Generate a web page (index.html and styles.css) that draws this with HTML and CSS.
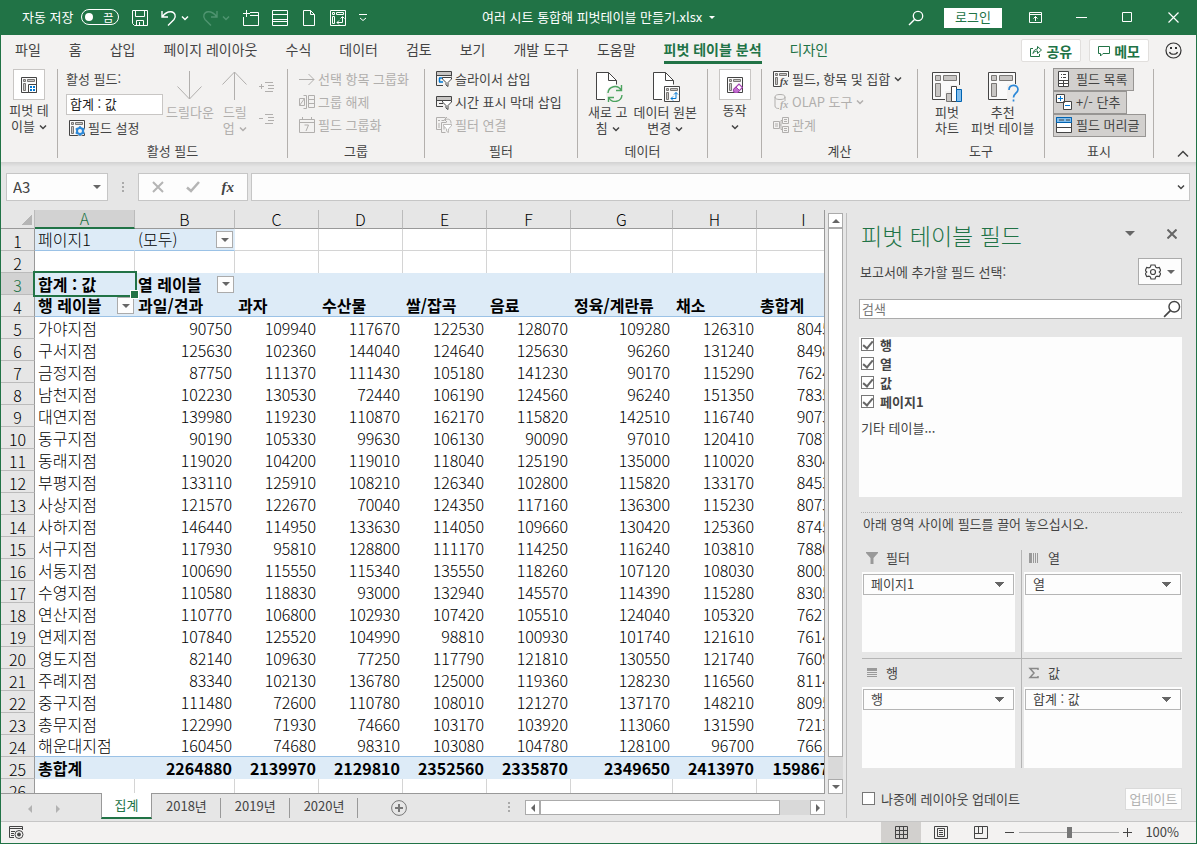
FILE: index.html
```
<!DOCTYPE html>
<html lang="ko">
<head>
    <meta charset="UTF-8">
    <meta name="viewport" content="width=device-width, initial-scale=1.0">
    <title>여러 시트 통합해 피벗테이블 만들기.xlsx</title>
    <link rel="stylesheet" href="styles.css">
</head>
<body>
    <!-- Shared icons -->
    <svg class="sprite" aria-hidden="true">
        <symbol id="chevron" viewBox="0 0 8 8"><path d="M1 2.5 4 5.5 7 2.5" fill="none" stroke="currentColor" stroke-width="1.5"/></symbol>
        <symbol id="pivot" viewBox="0 0 16 16"><path d="M.5.5h15v15H.5z" fill="#fafafa" stroke="currentColor"/><path d="M2.5 2.5h2v2h-2zM6.500 2.500h7v2h-7zM2.500 6.500h2v7h-2z" fill="#c8c6c4" stroke="#797775"/></symbol>
        <symbol id="search" viewBox="0 0 16 16"><circle cx="10" cy="6" r="4.700" fill="none" stroke="currentColor" stroke-width="1.300"/><path d="M6.500 9.500 1 15" stroke="currentColor" stroke-width="1.500"/></symbol>
        <symbol id="filter" viewBox="0 0 10 10"><path d="M.5.5h9v1.500L6 5.500v4l-2-1.500V5.500L.5 2z" fill="#fff" stroke="currentColor"/></symbol>
    </svg>

    <header class="titlebar">
        <div class="quick-access">
            <label class="autosave">자동 저장 <input type="checkbox" class="toggle" aria-label="자동 저장"><span class="toggle-text">끔</span></label>
            <button class="qa" aria-label="저장"><svg width="16" height="16" viewBox="0 0 16 16" fill="none" stroke="currentColor"><path d="M.5.5h15v15H2.500l-2-2zM3.500.5v6h9v-6M4.500 15.500v-5h7v5M7.500 12v3.500"/></svg></button>
            <button class="qa with-arrow" aria-label="실행 취소"><svg width="16" height="16" viewBox="0 0 16 16" fill="none" stroke="currentColor" stroke-width="1.400"><path d="M1 1v6h6M1.500 6.500C4 3 7 1.500 10 1.700c4 .3 5.500 4.800 3 7.800L7 15.500"/></svg><svg width="8" height="8"><use href="#chevron"/></svg></button>
            <button class="qa with-arrow dim" aria-label="다시 실행"><svg width="16" height="16" viewBox="0 0 16 16" fill="none" stroke="currentColor" stroke-width="1.400"><path d="M15 1v6H9M14.500 6.500C12 3 9 1.500 6 1.700 2 2 .5 6.500 3 9.500l6 6"/></svg><svg width="8" height="8"><use href="#chevron"/></svg></button>
            <button class="qa" aria-label="새로 만들기"><svg width="16" height="16" viewBox="0 0 16 16" fill="none" stroke="currentColor"><path d="M7 2.500h8.500v13H.5V7M7 5.500h8.500M3.500 0v7M0 3.500h7"/></svg></button>
            <button class="qa" aria-label="표"><svg width="16" height="16" viewBox="0 0 16 16" fill="none" stroke="currentColor"><path d="M.5.5h15v15H.5zM.5 4.500h15M.5 9.500h15M.5 11.500h15"/></svg></button>
            <button class="qa" aria-label="새 문서"><svg width="16" height="16" viewBox="0 0 16 16" fill="none" stroke="currentColor"><path d="M2.500.5h7l4 4v11h-11zM9.500.5v4h4"/></svg></button>
            <button class="qa" aria-label="피벗"><svg width="16" height="16" viewBox="0 0 16 16" fill="none" stroke="currentColor"><path d="M.5.5h15v15H.5zM2.500 2.500h2v2h-2zM6.500 2.500h7v2h-7zM2.500 6.500h2v7h-2zM7 12.500h5.500V7M9 10.500l-2 2 2 2M10.500 8.500l2-2 2 2"/></svg></button>
            <button class="qa" aria-label="사용자 지정"><svg width="8" height="8" viewBox="0 0 8 8" fill="none" stroke="currentColor"><path d="M0 .5h8M1 4l3 2.500L7 4"/></svg></button>
        </div>
        <div class="file-name">여러 시트 통합해 피벗테이블 만들기.xlsx <span class="tri light"></span></div>
        <div class="window-controls">
            <button class="qa" aria-label="검색"><svg width="16" height="16"><use href="#search"/></svg></button>
            <button class="login">로그인</button>
            <button class="wc" aria-label="리본 표시"><svg width="13" height="11" viewBox="0 0 13 11" fill="none" stroke="currentColor"><path d="M.5.5h12v10H.5zM.5 2.500h12M6.500 9V4.500M4.500 6.500l2-2 2 2"/></svg></button>
            <button class="wc" aria-label="최소화"><svg width="11" height="11" viewBox="0 0 11 11" stroke="currentColor"><path d="M0 5.500h11"/></svg></button>
            <button class="wc" aria-label="최대화"><svg width="11" height="11" viewBox="0 0 11 11" fill="none" stroke="currentColor"><path d="M.5.5h9v9h-9z"/></svg></button>
            <button class="wc" aria-label="닫기"><svg width="11" height="11" viewBox="0 0 11 11" stroke="currentColor" stroke-width="1.200"><path d="M.5.5l10 10M10.500.5l-10 10"/></svg></button>
        </div>
    </header>

    <nav class="tabs">
        <a href="#">파일</a>
        <a href="#">홈</a>
        <a href="#">삽입</a>
        <a href="#">페이지 레이아웃</a>
        <a href="#">수식</a>
        <a href="#">데이터</a>
        <a href="#">검토</a>
        <a href="#">보기</a>
        <a href="#">개발 도구</a>
        <a href="#">도움말</a>
        <a href="#" class="active">피벗 테이블 분석</a>
        <a href="#" class="context">디자인</a>
        <div class="tab-actions">
            <button class="share"><svg width="12" height="12" viewBox="0 0 12 12" fill="none" stroke="currentColor"><path d="M3 3.500H.5v8h9V9M3 8.500c.5-3 2-4.500 4.500-4.500V1.500l4 3.500-4 3.500V6C5.500 6 4 6.500 3 8.500z"/></svg>공유</button>
            <button class="share"><svg width="12" height="12" viewBox="0 0 12 12" fill="none" stroke="currentColor"><path d="M.5 1.500h11v7H5l-2.500 2.500V8.500h-2z"/></svg>메모</button>
            <button class="smile" aria-label="피드백"><svg width="17" height="17" viewBox="0 0 17 17" fill="none" stroke="#333" stroke-width="1.200"><circle cx="8.500" cy="8.500" r="7.500"/><path d="M4.500 10c1 3 7 3 8 0"/><path d="M6 5v2M11 5v2" stroke-width="2"/></svg></button>
        </div>
    </nav>

    <section class="ribbon">
        <div class="group g-pivot">
            <button class="big boxed"><span class="box"><svg width="16" height="16"><use href="#pivot"/><path d="M7.500 7.500h8v8h-8z" fill="#fff" stroke="#444"/><path d="M9 10h2M12 10h2M9 13h2M12 13h2" stroke="#0078d4" stroke-width="2"/></svg></span>피벗 테<br>이블<svg class="arr"><use href="#chevron"/></svg></button>
        </div>

        <div class="group g-active">
            <div class="group-body">
                <div class="active-field">
                    <label for="field-name">활성 필드:</label>
                    <input type="text" id="field-name" value="합계 : 값">
                    <button class="cmd"><svg width="16" height="16" viewBox="0 0 16 16"><use href="#pivot"/><circle cx="11" cy="11" r="5" fill="#f3f2f1"/><circle cx="11" cy="11" r="3" fill="none" stroke="#2b88d8" stroke-width="2"/><path d="M11 6v2M11 14v2M6.700 8.500l1.700 1M13.600 12.500l1.700 1M6.700 13.500l1.700-1M13.600 9.500l1.700-1" stroke="#2b88d8" stroke-width="1.500"/></svg>필드 설정</button>
                </div>
                <button class="big off" disabled><svg width="26" height="32" viewBox="0 0 26 32" fill="none" stroke="currentColor"><path d="M12.500 1v28M.5 16.500l12 12.500 12-12.500"/></svg>드릴다운</button>
                <button class="big off" disabled><svg width="26" height="32" viewBox="0 0 26 32" fill="none" stroke="currentColor"><path d="M12.500 30V2M.5 14.500 12.500 2l12 12.500"/></svg>드릴<br>업<svg class="arr"><use href="#chevron"/></svg></button>
                <div class="expand off">
                    <button aria-label="필드 확장" disabled><svg width="16" height="12" viewBox="0 0 16 12" stroke="currentColor"><path d="M6 1.500h8M9 4.500h6M9 7.500h6M6 10.500h8M0 5.500h5M2.500 3v5"/></svg></button>
                    <button aria-label="필드 축소" disabled><svg width="16" height="12" viewBox="0 0 16 12" stroke="currentColor"><path d="M6 1.500h8M9 4.500h6M9 7.500h6M6 10.500h8M0 5.500h4"/></svg></button>
                </div>
            </div>
            <div class="group-label">활성 필드</div>
        </div>

        <div class="group g-group">
            <div class="group-body rows off">
                <button class="cmd" disabled><svg width="16" height="16" viewBox="0 0 16 16" fill="none" stroke="currentColor"><path d="M0 8.500h15M9.500 3 15 8.500 9.500 14"/></svg>선택 항목 그룹화</button>
                <button class="cmd" disabled><svg width="16" height="16" viewBox="0 0 16 16" fill="none" stroke="currentColor"><path d="M.5 4.500h5v7h-5zM.5 11.500l5-7M7.500 1.500h-3M7.500 14.500h-3M7.500 1.500v13M9.500 1.500h6v12h-6zM9.500 5.500h6M9.500 9.500h6"/></svg>그룹 해제</button>
                <button class="cmd" disabled><svg width="16" height="16" viewBox="0 0 16 16" fill="none" stroke="currentColor"><path d="M.5 2.500h15v13H.5zM.5 5.500h15M3.500 0v3M12.500 0v3M5.500 8h4L7 14"/></svg>필드 그룹화</button>
            </div>
            <div class="group-label">그룹</div>
        </div>

        <div class="group g-filter">
            <div class="group-body rows">
                <button class="cmd"><svg width="16" height="16" viewBox="0 0 16 16" fill="none" stroke="currentColor"><path d="M1 1h14v3H1z" fill="#c8c6c4" stroke="none"/><path d="M7 14.500H.5V.5h15v5M.5 4.500h15"/><path d="M3 7h10M3 11h4M3.500 7v4" stroke="#0078d4" stroke-width="1.500"/><svg x="6" y="6" width="10" height="10"><use href="#filter"/></svg></svg>슬라이서 삽입</button>
                <button class="cmd"><svg width="16" height="16" viewBox="0 0 16 16" fill="none" stroke="currentColor"><path d="M1 3h14v3H1z" fill="#c8c6c4" stroke="none"/><path d="M7 12.500H.5v-10h15V6M.5 6.500h15M3 9.500h4"/><svg x="6" y="6" width="10" height="10"><use href="#filter"/></svg></svg>시간 표시 막대 삽입</button>
                <button class="cmd off" disabled><svg width="16" height="16" viewBox="0 0 16 16" fill="none" stroke="currentColor"><path d="M6 12.500H.5V.5h9M2 3.500h2M5.500 3.500h3M3 6v5M5.500 15.500v-10h5M5.500 15.500h4M8 8.500v4M11 0 8.500 2.500 11 5M9 2.500c4-1 6 0 6 4"/><svg x="7" y="7" width="9" height="9"><use href="#filter"/></svg></svg>필터 연결</button>
            </div>
            <div class="group-label">필터</div>
        </div>

        <div class="group g-data">
            <div class="group-body">
                <button class="big"><svg width="32" height="32" viewBox="0 0 32 32" fill="none"><path d="M4.500 2.500h12l8 8v19h-20z" fill="#fff"/><path d="M13 29.500H4.500v-27h12l8 8v4M16.500 2.500v8h8" stroke="#444"/><circle cx="23" cy="24" r="9" fill="#f3f2f1"/><path d="M16 23a7 7 0 0 1 13-3M30 25a7 7 0 0 1-13 3M29.500 15v5.500H24M16.500 33v-5.500H22" stroke="#4ba35f" stroke-width="1.400"/></svg>새로 고<br>침<svg class="arr"><use href="#chevron"/></svg></button>
                <button class="big"><svg width="32" height="32" viewBox="0 0 32 32" fill="none"><path d="M4.500 2.500h12l8 8v19h-20z" fill="#fff"/><path d="M13 29.500H4.500v-27h12l8 8v4M16.500 2.500v8h8" stroke="#444"/><svg x="15" y="16" width="16" height="16"><use href="#pivot"/></svg><path d="M22 28.500h5v-6M24 26.500l-2 2 2 2M25 24.500l2-2 2 2" stroke="#0078d4"/></svg>데이터 원본<br>변경<svg class="arr"><use href="#chevron"/></svg></button>
            </div>
            <div class="group-label">데이터</div>
        </div>

        <div class="group g-action">
            <button class="big boxed"><span class="box"><svg width="16" height="16" viewBox="0 0 16 16"><use href="#pivot"/><path d="M6.500 12.500 12 7l3.500 3.500L10 16H8.500l-2-2z" fill="#fff" stroke="#a33fb0" stroke-width="1.200"/><path d="M6.500 12.500 9 10l3.500 3.500L10 16H8.500l-2-2z" fill="#c26fce" stroke="#a33fb0"/></svg></span>동작<br><svg class="arr lone"><use href="#chevron"/></svg></button>
        </div>

        <div class="group g-calc">
            <div class="group-body rows">
                <button class="cmd"><svg width="16" height="16" viewBox="0 0 16 16"><use href="#pivot"/><path d="M7 6h9v10H7z" fill="#f3f2f1"/><text x="7" y="14" class="fx-small">fx</text></svg>필드, 항목 및 집합<svg class="arr"><use href="#chevron"/></svg></button>
                <button class="cmd off" disabled><svg width="16" height="16" viewBox="0 0 16 16" fill="none" stroke="currentColor"><ellipse cx="7" cy="3" rx="5" ry="2.500"/><path d="M2 3v9c0 2 2 2.500 4 2.500M12 3v4"/><text x="7" y="14" class="fx-small">fx</text></svg>OLAP 도구<svg class="arr"><use href="#chevron"/></svg></button>
                <button class="cmd off" disabled><svg width="16" height="16" viewBox="0 0 16 16" fill="none" stroke="currentColor"><path d="M.5 4.500h6v7h-6zM9.500.5h6v6h-6zM9.500 9.500h6v6h-6zM6.500 8h1.500M9.500 3.500H8v9h1.500M2 7h3M2 9h3M11 2.500h3M11 4.500h3M11 11.500h3M11 13.500h3"/></svg>관계</button>
            </div>
            <div class="group-label">계산</div>
        </div>

        <div class="group g-tools">
            <div class="group-body">
                <button class="big"><svg width="32" height="32" viewBox="0 0 32 32"><path d="M1.500 2.500h27v27h-27z" fill="#fafafa" stroke="#444"/><path d="M4.500 5.500h5v5h-5zM12.500 5.500h13v5h-13zM4.500 13.500h5v13h-5z" fill="#c8c6c4" stroke="#797775"/><path d="M14 21h5v-6h12v17H14z" fill="#f3f2f1"/><path d="M15.500 23.500h5v8h-5z" fill="#c8c6c4" stroke="#797775"/><path d="M20.500 16.500h5v15h-5z" fill="#fff" stroke="#444"/><path d="M25.500 19.500h5v12h-5z" fill="#83beec" stroke="#0063b1"/></svg>피벗<br>차트</button>
                <button class="big"><svg width="32" height="32" viewBox="0 0 32 32"><path d="M1.500 2.500h27v27h-27z" fill="#fafafa" stroke="#444"/><path d="M4.500 5.500h5v5h-5zM12.500 5.500h13v5h-13zM4.500 13.500h5v13h-5z" fill="#c8c6c4" stroke="#797775"/><path d="M20 14h12v18H20z" fill="#f3f2f1"/><path d="M22 20c0-6 9-6 9-.5 0 3.500-4.500 4-4.500 8M26.500 29.500v2" fill="none" stroke="#2b88d8" stroke-width="1.700"/></svg>추천<br>피벗 테이블</button>
            </div>
            <div class="group-label">도구</div>
        </div>

        <div class="group g-show">
            <div class="group-body rows">
                <button class="cmd pressed" aria-pressed="true"><svg width="16" height="16" viewBox="0 0 16 16" stroke="#444"><path d="M2.500.5h10v15h-10z" fill="#fff"/><path d="M5 3.500h1M7 3.500h3M5 6.500h1M7 6.500h3M2.500 9.500h10M2.500 12.500h10M7.500 9.500v6"/></svg>필드 목록</button>
                <button class="cmd pressed" aria-pressed="true"><svg width="16" height="16" viewBox="0 0 16 16"><path d="M.5.5h8v8h-8zM7.500 7.500h8v8h-8z" fill="#fff" stroke="#444"/><path d="M2 4.500h5M4.500 2v5M9 11.500h5" stroke="#0078d4"/></svg>+/- 단추</button>
                <button class="cmd pressed" aria-pressed="true"><svg width="16" height="16" viewBox="0 0 16 16"><path d="M.5.5h15v15H.5z" fill="#fff" stroke="#444"/><path d="M.5.5h15v5H.5z" fill="#83beec" stroke="#0063b1"/><path d="M.5 10.500h15M3 3h5M10 3h4" stroke="#444"/></svg>필드 머리글</button>
            </div>
            <div class="group-label">표시</div>
        </div>
        <button class="collapse" aria-label="리본 축소"><svg width="12" height="8" viewBox="0 0 12 8" fill="none" stroke="#444" stroke-width="1.500"><path d="M1 6.500l5-5 5 5"/></svg></button>
    </section>

    <div class="formula-bar">
        <div class="name-box"><input type="text" value="A3" aria-label="이름 상자"><button aria-label="이름 목록"><span class="tri"></span></button></div>
        <span class="dots"></span>
        <div class="fx-buttons">
            <button aria-label="취소"><svg width="12" height="12" viewBox="0 0 12 12" stroke="#b5b5b5" stroke-width="2"><path d="M1 1l10 10M11 1 1 11"/></svg></button>
            <button aria-label="입력"><svg width="14" height="12" viewBox="0 0 14 12" fill="none" stroke="#b5b5b5" stroke-width="2.500"><path d="M1 6.500 5 10l8-9"/></svg></button>
            <button aria-label="함수 삽입" class="fx">fx</button>
        </div>
        <div class="formula"><input type="text" aria-label="수식"><button aria-label="수식 입력줄 확장"><svg width="8" height="8"><use href="#chevron"/></svg></button></div>
    </div>

    <main class="workspace">
        <section class="book">
            <div class="grid-area">
                <div class="grid">
                    <table>
                        <colgroup>
                            <col class="c-num"><col class="c-wide"><col class="c-wide"><col class="c-mid"><col class="c-mid"><col class="c-mid"><col class="c-mid"><col class="c-big"><col class="c-mid"><col class="c-total">
                        </colgroup>
                        <thead>
                            <tr><th class="corner"></th><th class="on">A</th><th>B</th><th>C</th><th>D</th><th>E</th><th>F</th><th>G</th><th>H</th><th>I</th></tr>
                        </thead>
                        <tbody id="cells">
                            <tr class="page"><th>1</th><td class="blue">페이지1</td><td class="blue"><div class="with-filter">(모두)<button class="drop" aria-label="페이지1 필터"><span class="tri"></span></button></div></td><td></td><td></td><td></td><td></td><td></td><td></td><td></td></tr>
                            <tr class="lined"><th>2</th><td></td><td></td><td></td><td></td><td></td><td></td><td></td><td></td><td></td></tr>
                            <tr class="head"><th class="on">3</th><td class="selected">합계 : 값</td><td><div class="with-filter">열 레이블<button class="drop" aria-label="열 레이블 필터"><span class="tri"></span></button></div></td><td></td><td></td><td></td><td></td><td></td><td></td><td></td></tr>
                            <tr class="head under"><th>4</th><td><div class="with-filter">행 레이블<button class="drop" aria-label="행 레이블 필터"><span class="tri"></span></button></div></td><td>과일/견과</td><td>과자</td><td>수산물</td><td>쌀/잡곡</td><td>음료</td><td>정육/계란류</td><td>채소</td><td>총합계</td></tr>
                        </tbody>
                    </table>
                </div>
                <div class="scroll-v">
                    <button aria-label="위로"><span class="tri up"></span></button>
                    <div class="thumb"></div>
                    <button aria-label="아래로"><span class="tri"></span></button>
                </div>
            </div>
            <div class="sheet-bar">
                <div class="sheet-nav"><button aria-label="이전 시트"><span class="tri left"></span></button><button aria-label="다음 시트"><span class="tri right"></span></button></div>
                <button class="sheet current">집계</button>
                <button class="sheet">2018년</button>
                <button class="sheet">2019년</button>
                <button class="sheet">2020년</button>
                <button class="add-sheet" aria-label="새 시트"><svg width="16" height="16" viewBox="0 0 16 16" fill="none" stroke="#777"><circle cx="8" cy="8" r="7.400"/><path d="M8 4v8M4 8h8" stroke-width="2"/></svg></button>
                <span class="dots"></span>
                <div class="scroll-h">
                    <button aria-label="왼쪽으로"><span class="tri left"></span></button>
                    <div class="thumb"></div>
                    <button aria-label="오른쪽으로"><span class="tri right"></span></button>
                </div>
            </div>
        </section>

        <aside class="pane">
            <div class="pane-title">
                <h2>피벗 테이블 필드</h2>
                <button aria-label="작업창 옵션"><span class="tri large"></span></button>
                <button aria-label="닫기"><svg width="10" height="10" viewBox="0 0 10 10" stroke="#666" stroke-width="2"><path d="M.5.5l9 9M9.500.5l-9 9"/></svg></button>
            </div>
            <div class="pane-sub">
                <span>보고서에 추가할 필드 선택:</span>
                <button class="gear" aria-label="도구"><svg width="16" height="16" viewBox="0 0 16 16" fill="none" stroke="#444" stroke-width="1.200"><path d="M6 1h4l.7 2.200 1.300.7 2.300-.5 1.400 3.100L14.300 8l1.400 1.500-1.400 3.100-2.300-.5-1.300.7L10 15H6l-.7-2.200-1.300-.7-2.300.5L.3 9.500 1.700 8 .3 6.500l1.400-3.100 2.300.5 1.300-.7z"/><circle cx="8" cy="8" r="2.500"/></svg><span class="tri"></span></button>
            </div>
            <div class="search"><input type="text" placeholder="검색" aria-label="필드 검색"><svg width="18" height="18"><use href="#search"/></svg></div>
            <div class="field-list">
                <label><input type="checkbox" checked>행</label>
                <label><input type="checkbox" checked>열</label>
                <label><input type="checkbox" checked>값</label>
                <label><input type="checkbox" checked>페이지1</label>
                <a href="#">기타 테이블...</a>
            </div>
            <p class="hint">아래 영역 사이에 필드를 끌어 놓으십시오.</p>
            <div class="areas">
                <div class="area">
                    <label for="a-filter"><svg width="12" height="12" viewBox="0 0 12 12" fill="#999"><path d="M0 0h12v1L7.500 6v6h-3V6L0 1z"/></svg>필터</label>
                    <div class="area-box"><select id="a-filter"><option>페이지1</option></select></div>
                </div>
                <div class="area">
                    <label for="a-col"><svg width="12" height="12" viewBox="0 0 12 12" fill="#999"><path d="M1 1h3v10H1zM5 1h1v10H5zM7 1h1v10H7zM9 1h1v10H9z"/></svg>열</label>
                    <div class="area-box"><select id="a-col"><option>열</option></select></div>
                </div>
                <div class="area">
                    <label for="a-row"><svg width="12" height="12" viewBox="0 0 12 12" fill="#999"><path d="M1 1h10v3H1zM1 5h10v1H1zM1 7h10v1H1zM1 9h10v1H1z"/></svg>행</label>
                    <div class="area-box"><select id="a-row"><option>행</option></select></div>
                </div>
                <div class="area">
                    <label for="a-val"><svg width="12" height="12" viewBox="0 0 12 12" fill="none" stroke="#888" stroke-width="1.500"><path d="M10 3V1.500H2L6 6l-4 4.500h8V9"/></svg>값</label>
                    <div class="area-box"><select id="a-val"><option>합계 : 값</option></select></div>
                </div>
            </div>
            <div class="pane-foot">
                <label><input type="checkbox">나중에 레이아웃 업데이트</label>
                <button class="update" disabled>업데이트</button>
            </div>
        </aside>
    </main>

    <footer class="status">
        <button class="macro" aria-label="매크로 기록"><svg width="15" height="13" viewBox="0 0 15 13" fill="none" stroke="#444"><path d="M5 11.500H.5V.5h13V4M.5 2.500h13M2 5.500h4M2 7.500h3M2 9.500h3"/><circle cx="10" cy="8.500" r="4"/><circle cx="10" cy="8.500" r="1.500" fill="#444"/></svg></button>
        <button class="view on" aria-label="기본"><svg width="13" height="13" viewBox="0 0 13 13" fill="none" stroke="#444"><path d="M.5.5h12v12H.5zM4.500.5v12M8.500.5v12M.5 4.500h12M.5 8.500h12"/></svg></button>
        <button class="view" aria-label="페이지 레이아웃"><svg width="14" height="13" viewBox="0 0 14 13" fill="none" stroke="#444"><path d="M.5.5h13v12H.5zM3.500 2.500h7v8h-7zM5 4.500h4M5 6.500h4M5 8.500h4"/></svg></button>
        <button class="view" aria-label="페이지 나누기"><svg width="14" height="13" viewBox="0 0 14 13" fill="none" stroke="#444"><path d="M.5.5h13v12H.5zM.5 7.500h8v-7M4.500.5v7"/></svg></button>
        <button class="zoom-btn" aria-label="축소"><svg width="9" height="9" viewBox="0 0 9 9" stroke="#444"><path d="M0 4.500h9"/></svg></button>
        <input type="range" class="zoom" min="0" max="100" value="50" aria-label="확대/축소">
        <button class="zoom-btn" aria-label="확대"><svg width="9" height="9" viewBox="0 0 9 9" stroke="#444"><path d="M0 4.500h9M4.500 0v9"/></svg></button>
        <span class="percent">100%</span>
    </footer>

    <script src="script.js"></script>
</body>
</html>
```
FILE: styles.css
```
* {
    box-sizing: border-box;
}

body {
    margin: 0;
    height: 100vh;
    display: flex;
    flex-direction: column;
    overflow: hidden;
    border: 1px solid #217346;
    border-top: none;
    background-color: #e6e6e6;
    color: #444;
    font-family: "Noto Sans CJK KR", "Noto Sans", sans-serif;
    font-size: 13px;
    line-height: 16px;
}

button, input, select {
    font: inherit;
    color: inherit;
    margin: 0;
    padding: 0;
    border: none;
    border-radius: 0;
    background: none;
}

a {
    color: inherit;
    text-decoration: none;
}

svg {
    flex: none;
}

.sprite {
    display: none;
}

/* Small arrows */
.tri {
    display: inline-block;
    flex: none;
    border: 4px solid transparent;
    border-top-color: #666;
    border-bottom: none;
}

.tri.light {
    border-width: 3px;
    border-top-color: #fff;
    border-bottom: none;
    vertical-align: middle;
    margin-left: 3px;
}

.tri.large {
    border-width: 5px;
    border-bottom: none;
}

.tri.up {
    border-top: none;
    border-bottom: 4px solid #666;
}

.tri.left {
    border: 4px solid transparent;
    border-right-color: #666;
    border-left: none;
}

.tri.right {
    border: 4px solid transparent;
    border-left-color: #666;
    border-right: none;
}

.dots {
    width: 2px;
    height: 11px;
    background: repeating-linear-gradient(#aaa 0 2px, transparent 2px 4px);
}

/* Title bar */
.titlebar {
    flex: none;
    height: 35px;
    display: grid;
    grid-template-columns: 1fr auto 1fr;
    align-items: center;
    background-color: #217346;
    color: #fff;
}

.file-name {
    padding-bottom: 2px;
}

.quick-access {
    display: flex;
    align-items: center;
    gap: 13px;
    padding-left: 21px;
}

.autosave {
    position: relative;
    display: flex;
    align-items: center;
    gap: 8px;
    padding-bottom: 2px;
}

.toggle {
    appearance: none;
    width: 38px;
    height: 16px;
    border: 1px solid #fff;
    border-radius: 8px;
    display: flex;
    align-items: center;
    padding-left: 3px;
}

.toggle::before {
    content: "";
    width: 8px;
    height: 8px;
    border-radius: 50%;
    background-color: #fff;
}

.toggle-text {
    position: absolute;
    right: 6px;
    font-size: 11px;
}

.qa {
    display: flex;
    align-items: center;
}

.with-arrow {
    gap: 4px;
}

.dim {
    color: #4f9470;
}

.window-controls {
    display: flex;
    justify-content: flex-end;
    align-items: center;
}

.login {
    width: 58px;
    height: 20px;
    margin: 0 10px 0 20px;
    padding-bottom: 2px;
    background-color: #fff;
    color: #217346;
}

.wc {
    width: 46px;
    height: 35px;
    display: flex;
    align-items: center;
    justify-content: center;
}

/* Ribbon tabs */
.tabs {
    flex: none;
    height: 32px;
    display: flex;
    align-items: flex-start;
    gap: 28px;
    padding: 4px 14px 0 14px;
    background-color: #f3f2f1;
    font-size: 14px;
    white-space: nowrap;
}

.tabs a {
    padding-bottom: 2px;
    line-height: 20px;
    border-bottom: 3px solid transparent;
}

.tabs .active {
    color: #217346;
    font-weight: bold;
    border-bottom-color: #217346;
}

.tabs .context {
    color: #217346;
}

.tab-actions {
    margin-left: auto;
    display: flex;
    align-items: center;
    gap: 8px;
}

.share {
    display: flex;
    align-items: center;
    gap: 4px;
    height: 23px;
    padding: 0 8px;
    background-color: #fff;
    border: 1px solid #e1dfdd;
    border-radius: 2px;
    color: #217346;
    font-size: 14px;
    font-weight: bold;
}

.smile {
    display: flex;
    padding-left: 8px;
}

/* Ribbon */
.ribbon {
    flex: none;
    height: 95px;
    display: flex;
    padding: 2px 0 4px;
    background-color: #f3f2f1;
    white-space: nowrap;
}

.group {
    flex: none;
    display: flex;
    flex-direction: column;
    align-items: center;
    border-right: 1px solid #b3b0ad;
}

.group-body {
    flex: 1;
    width: 100%;
    display: flex;
}

.group-label {
    margin-bottom: -1px;
    text-align: center;
}

.g-pivot { width: 57px; }
.g-active { width: 230px; }
.g-group { width: 137px; }
.g-filter { width: 153px; }
.g-data { width: 130px; }
.g-action { width: 54px; }
.g-calc { width: 156px; }
.g-tools { width: 127px; }
.g-show { width: 109px; }

.g-active .group-body {
    padding-left: 8px;
    gap: 3px;
}

.g-active .big + .big {
    margin-left: 5px;
}

.g-group .rows,
.g-filter .rows,
.g-calc .rows {
    padding-left: 11px;
}

.g-data .group-body {
    padding-left: 10px;
    gap: 6px;
}

.g-tools .group-body {
    padding-left: 13px;
    gap: 8px;
}

.g-show .rows {
    padding-left: 8px;
    margin-top: -1px;
}

.rows {
    flex-direction: column;
    align-items: flex-start;
}

.cmd {
    display: flex;
    align-items: center;
    gap: 3px;
    height: 23px;
}

.rows .cmd:first-child {
    margin-top: -2px;
}

.g-show .cmd:first-child {
    margin-top: 0;
}

.arr {
    width: 8px;
    height: 8px;
    margin-left: 4px;
}

.arr.lone {
    margin-left: 0;
}

.cmd .arr {
    margin-left: 1px;
}

.pressed {
    padding: 0 6px 1px 2px;
    gap: 4px;
    background-color: #d2d0ce;
    border: 1px solid #979593;
}

.off {
    color: #b1afad;
}

.big {
    line-height: 16px;
    text-align: center;
    align-self: flex-start;
    padding-top: 1px;
}

.big > svg:first-child {
    display: block;
    margin: 0 auto 2px;
}

.boxed {
    padding-top: 0;
    align-self: center;
}

.box {
    display: flex;
    align-items: center;
    justify-content: center;
    width: 32px;
    height: 31px;
    margin: 0 auto 2px;
    background-color: #fff;
    border: 1px solid #c8c6c4;
}

.active-field {
    width: 97px;
    display: flex;
    flex-direction: column;
    padding-top: 2px;
}

.active-field input {
    width: 97px;
    height: 21px;
    margin: 7px 0 1px;
    padding: 0 3px 2px;
    background-color: #fff;
    border: 1px solid #c8c6c4;
    color: #222;
}

.active-field .cmd {
    padding-left: 3px;
}

.expand {
    display: flex;
    flex-direction: column;
    gap: 20px;
    padding: 12px 0 0 8px;
}

.expand button {
    height: 12px;
    display: flex;
}

.fx-small {
    font: italic bold 10px "Liberation Serif", serif;
    fill: currentColor;
    stroke: none;
}

.collapse {
    margin: auto 7px 0 auto;
    display: flex;
}

/* Formula bar */
.formula-bar {
    flex: none;
    height: 48px;
    display: flex;
    align-items: center;
    padding: 2px 6px 0 5px;
    background: linear-gradient(#d2d2d2, #e6e6e6 5px);
}

.formula-bar button {
    display: flex;
}

.name-box,
.fx-buttons,
.formula {
    height: 28px;
    display: flex;
    align-items: center;
    background-color: #fdfdfd;
    border: 1px solid #c6c6c6;
}

.name-box {
    width: 102px;
    padding: 0 6px;
    font-size: 15px;
}

.name-box input {
    flex: 1;
    min-width: 0;
}

.formula-bar .dots {
    margin: 0 14px;
}

.fx-buttons {
    width: 110px;
    justify-content: space-around;
    padding: 0 2px;
    margin-right: 3px;
}

.fx {
    font: italic bold 15px "Liberation Serif", serif;
}

.formula {
    flex: 1;
    padding: 0 4px;
}

.formula input {
    flex: 1;
}

/* Workspace */
.workspace {
    flex: 1;
    min-height: 0;
    display: flex;
}

.book {
    flex: 1;
    min-width: 0;
    display: flex;
    flex-direction: column;
}

.grid-area {
    flex: 1;
    min-height: 0;
    display: flex;
}

.grid {
    flex: 1;
    min-width: 0;
    overflow: hidden;
    border-right: 1px solid #999;
    border-bottom: 1px solid #999;
}

table {
    width: 850px;
    table-layout: fixed;
    border-collapse: separate;
    border-spacing: 0;
    font-size: 16px;
    line-height: 21px;
    color: #000;
    background-color: #fff;
    white-space: nowrap;
}

.c-num { width: 34px; }
.c-wide { width: 100px; }
.c-mid { width: 84px; }
.c-big { width: 102px; }
.c-total { width: 94px; }

th {
    padding: 0;
    font-weight: 300;
    background-color: #e6e6e6;
    border-right: 1px solid #999;
    border-bottom: 1px solid #bbb;
}

thead th {
    height: 19px;
    line-height: 17px;
    border-right-color: #bbb;
    border-bottom-color: #999;
}

tbody th {
    padding-top: 3px;
    line-height: 18px;
}

th.on {
    background-color: #d2d2d2;
    color: #217346;
}

thead th.on {
    border-bottom: 2px solid #217346;
}

.corner {
    background: linear-gradient(135deg, transparent 50%, #b5b5b5 50%) no-repeat 20px 5px / 11px 10px #e6e6e6;
}

td {
    height: 22px;
    padding: 0 3px;
    text-align: right;
    font-weight: 300;
}

td:nth-child(2),
.page td,
.head td {
    text-align: left;
}

.page td,
.lined td {
    border-right: 1px solid #d4d4d4;
}

.page td {
    border-bottom: 1px solid #d4d4d4;
}

.page td.blue {
    background-color: #ddebf7;
    border-right-color: #ddebf7;
    border-bottom-color: #9bc2e6;
}

.head td,
.total td {
    background-color: #ddebf7;
    font-weight: bold;
}

.under td,
.last td {
    border-bottom: 1px solid #9bc2e6;
}

.with-filter {
    display: flex;
    align-items: center;
    justify-content: space-between;
    margin-right: -2px;
}

.drop {
    width: 17px;
    height: 17px;
    display: flex;
    align-items: center;
    justify-content: center;
    background-color: #fdfdfd;
    border: 1px solid #ababab;
}

.selected {
    position: relative;
}

.selected::before {
    content: "";
    position: absolute;
    inset: -2px;
    border: 2px solid #217346;
}

.selected::after {
    content: "";
    position: absolute;
    right: -4px;
    bottom: -4px;
    width: 7px;
    height: 7px;
    background-color: #217346;
    border: 1px solid #fff;
}

/* Scroll bars */
.scroll-v,
.scroll-h {
    display: flex;
    background-color: #d9d9d9;
}

.scroll-v {
    flex-direction: column;
    width: 15px;
    margin: 3px 3px 0 3px;
}

.scroll-h {
    width: 300px;
    height: 15px;
}

.scroll-v button,
.scroll-h button {
    flex: none;
    width: 15px;
    height: 15px;
    display: flex;
    align-items: center;
    justify-content: center;
    background-color: #fff;
    border: 1px solid #ababab;
}

.scroll-v button:last-child {
    margin-top: auto;
}

.scroll-h button:last-child {
    margin-left: auto;
}

.thumb {
    background-color: #fff;
    border: 1px solid #ababab;
}

.scroll-v .thumb {
    height: 91%;
}

.scroll-h .thumb {
    width: 80%;
}

/* Sheet tabs */
.sheet-bar {
    flex: none;
    height: 27px;
    display: flex;
    align-items: center;
    padding-right: 21px;
}

.sheet-nav {
    width: 100px;
    display: flex;
    gap: 24px;
    padding-left: 27px;
    opacity: .4;
}

.sheet {
    height: 20px;
    padding: 0 13px 3px 14px;
    border-right: 1px solid #999;
    line-height: 16px;
}

.current {
    width: 51px;
    height: 26px;
    padding: 0;
    align-self: flex-start;
    margin-top: -1px;
    background-color: #fff;
    border-left: 1px solid #999;
    border-bottom: 2px solid #217346;
    color: #217346;
}

.add-sheet {
    display: flex;
    margin: 0 auto 0 33px;
}

.sheet-bar .dots {
    margin-right: 15px;
}

/* Field pane */
.pane {
    flex: none;
    width: 350px;
    display: flex;
    flex-direction: column;
    margin: 3px 0;
    padding: 6px 14px 0 12px;
    border-left: 1px solid #bdbdbd;
}

.pane-title {
    display: flex;
    align-items: center;
    gap: 32px;
    height: 32px;
    padding: 0 5px 0 2px;
}

.pane-title h2 {
    flex: 1;
    margin: 0;
    font-size: 23px;
    font-weight: 300;
    line-height: 30px;
    color: #217346;
}

.pane-title button {
    display: flex;
    padding-bottom: 3px;
}

.pane-sub {
    display: flex;
    justify-content: space-between;
    align-items: center;
    padding: 7px 0 14px 1px;
}

.gear {
    width: 44px;
    height: 27px;
    display: flex;
    align-items: center;
    justify-content: center;
    gap: 6px;
    background-color: #fdfdfd;
    border: 1px solid #ababab;
}

.search {
    display: flex;
    align-items: center;
    height: 20px;
    background-color: #fff;
    border: 1px solid #ababab;
}

.search input {
    flex: 1;
    padding: 0 0 2px 2px;
    height: 18px;
}

.search input::placeholder {
    color: #777;
}

.field-list {
    height: 160px;
    margin-top: 18px;
    padding-left: 2px;
    background-color: #fdfdfd;
}

.field-list label {
    display: flex;
    align-items: center;
    height: 19px;
    gap: 6px;
    padding-bottom: 4px;
    font-weight: bold;
}

.field-list a {
    display: block;
    margin-top: 7px;
}

input[type="checkbox"]:not(.toggle) {
    appearance: none;
    width: 13px;
    height: 13px;
    display: flex;
    justify-content: center;
    background-color: #fff;
    border: 1px solid #777;
}

input[type="checkbox"]:not(.toggle):checked::before {
    content: "";
    width: 4px;
    height: 8px;
    border: solid #666;
    border-width: 0 2px 2px 0;
    transform: rotate(40deg);
}

.hint {
    margin: 15px 0 0 2px;
    padding: 3px 0 18px 2px;
    border-top: 1px dotted #b5b5b5;
}

.areas {
    flex: 1;
    display: grid;
    grid-template-columns: 159px 1fr;
    grid-template-rows: 1fr 1fr;
    margin-left: 3px;
}

.area {
    display: flex;
    flex-direction: column;
    padding-right: 6px;
}

.area:nth-child(even) {
    padding: 0 0 0 2px;
    border-left: 1px solid #b5b5b5;
}

.area:nth-child(-n+2) {
    padding-bottom: 6px;
    border-bottom: 1px solid #b5b5b5;
}

.area:nth-child(n+3) {
    padding-top: 6px;
}

.area label {
    display: flex;
    align-items: center;
    gap: 8px;
    height: 22px;
    padding: 0 0 6px 4px;
}

.area-box {
    flex: 1;
    padding: 2px 1px;
    background-color: #fdfdfd;
}

.area-box select {
    appearance: none;
    display: block;
    width: 100%;
    height: 21px;
    padding: 0 7px 2px;
    border: 1px solid #b5b5b5;
    background: conic-gradient(from -45deg at 50% 100%, #666 90deg, transparent 0) no-repeat right 9px top 8px / 9px 5px, #fdfdfd;
}

/* the triangle points down */
.area-box select {
    background: linear-gradient(45deg, transparent 50%, #666 50%) no-repeat right 13px top 5px / 5px 5px, linear-gradient(-45deg, transparent 50%, #666 50%) no-repeat right 9px top 5px / 5px 5px, #fdfdfd;
    background: conic-gradient(from -45deg at 50% 100%, #666 90deg, transparent 0) no-repeat right 9px top 7px / 9px 5px, #fdfdfd;
}

.pane-foot {
    display: flex;
    justify-content: space-between;
    align-items: center;
    height: 50px;
    padding: 11px 0 0 3px;
}

.pane-foot label {
    display: flex;
    align-items: center;
    gap: 6px;
}

.update {
    width: 57px;
    height: 22px;
    background-color: #fdfdfd;
    border: 1px solid #dadada;
    color: #b1b1b1;
}

/* Status bar */
.status {
    flex: none;
    height: 22px;
    display: flex;
    align-items: center;
    padding-right: 17px;
    background-color: #f3f2f1;
    border-top: 1px solid #c6c6c6;
}

.macro {
    display: flex;
    margin: 0 auto 0 8px;
}

.view {
    width: 40px;
    height: 21px;
    display: flex;
    align-items: center;
    justify-content: center;
}

.view.on {
    background-color: #d2d0ce;
}

.zoom-btn {
    display: flex;
    margin-left: 4px;
}

.zoom {
    appearance: none;
    width: 100px;
    height: 12px;
    margin: 0 0 0 5px;
    background: linear-gradient(#ababab, #ababab) no-repeat center / 100% 1px;
}

.zoom::-webkit-slider-thumb {
    appearance: none;
    width: 5px;
    height: 11px;
    background-color: #777;
}

.percent {
    margin-left: 13px;
    padding-bottom: 2px;
}
```
FILE: script.js
```
const stores = [
    ['가야지점', 90750, 109940, 117670, 122530, 128070, 109280, 126310],
    ['구서지점', 125630, 102360, 144040, 124640, 125630, 96260, 131240],
    ['금정지점', 87750, 111370, 111430, 105180, 141230, 90170, 115290],
    ['남천지점', 102230, 130530, 72440, 106190, 124560, 96240, 151350],
    ['대연지점', 139980, 119230, 110870, 162170, 115820, 142510, 116740],
    ['동구지점', 90190, 105330, 99630, 106130, 90090, 97010, 120410],
    ['동래지점', 119020, 104200, 119010, 118040, 125190, 135000, 110020],
    ['부평지점', 133110, 125910, 108210, 126340, 102800, 115820, 133170],
    ['사상지점', 121570, 122670, 70040, 124350, 117160, 136300, 115230],
    ['사하지점', 146440, 114950, 133630, 114050, 109660, 130420, 125360],
    ['서구지점', 117930, 95810, 128800, 111170, 114250, 116240, 103810],
    ['서동지점', 100690, 115550, 115340, 135550, 118260, 107120, 108030],
    ['수영지점', 110580, 118830, 93000, 132940, 145570, 114390, 115280],
    ['연산지점', 110770, 106800, 102930, 107420, 105510, 124040, 105320],
    ['연제지점', 107840, 125520, 104990, 98810, 100930, 101740, 121610],
    ['영도지점', 82140, 109630, 77250, 117790, 121810, 130550, 121740],
    ['주례지점', 83340, 102130, 136780, 125000, 119360, 128230, 116560],
    ['중구지점', 111480, 72600, 110780, 108010, 121270, 137170, 148210],
    ['총무지점', 122990, 71930, 74660, 103170, 103920, 113060, 131590],
    ['해운대지점', 160450, 74680, 98310, 103080, 104780, 128100, 96700]
];

const body = document.getElementById('cells');
let rowNumber = 5;

function addRow(cells, className) {
    const tr = document.createElement('tr');
    tr.className = className;
    tr.innerHTML = `<th>${rowNumber}</th>` + cells.map(c => `<td>${c}</td>`).join('');
    body.appendChild(tr);
    rowNumber++;
}

const sum = numbers => numbers.reduce((a, b) => a + b, 0);

stores.forEach(([name, ...values], i) => {
    addRow([name, ...values, sum(values)], i === stores.length - 1 ? 'last' : '');
});

// Grand total row
const totals = [1, 2, 3, 4, 5, 6, 7].map(col => sum(stores.map(row => row[col])));
addRow(['총합계', ...totals, sum(totals)], 'total');
addRow(Array(9).fill(''), 'lined');
```
